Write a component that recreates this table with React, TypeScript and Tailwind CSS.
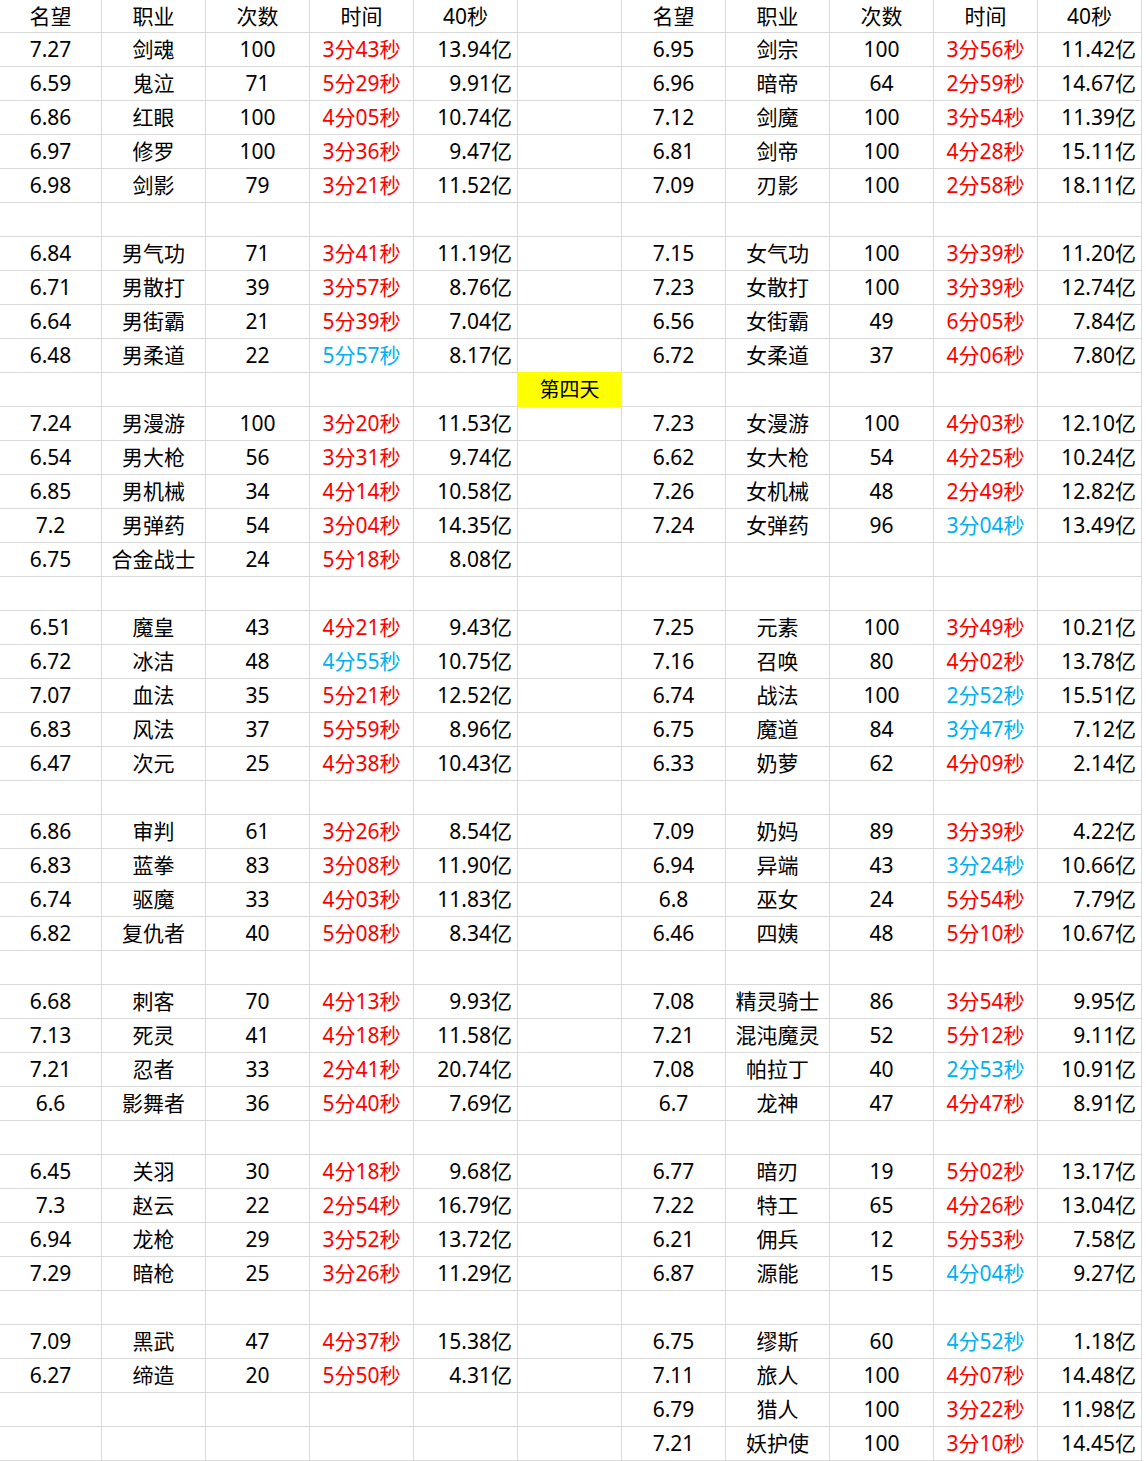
import React from 'react';

type Row = [string, string, string, string, string] | null;

// time prefixed with * renders blue instead of red
const left: Row[] = [
  ['7.27', '剑魂', '100', '3分43秒', '13.94亿'],
  ['6.59', '鬼泣', '71', '5分29秒', '9.91亿'],
  ['6.86', '红眼', '100', '4分05秒', '10.74亿'],
  ['6.97', '修罗', '100', '3分36秒', '9.47亿'],
  ['6.98', '剑影', '79', '3分21秒', '11.52亿'],
  null,
  ['6.84', '男气功', '71', '3分41秒', '11.19亿'],
  ['6.71', '男散打', '39', '3分57秒', '8.76亿'],
  ['6.64', '男街霸', '21', '5分39秒', '7.04亿'],
  ['6.48', '男柔道', '22', '*5分57秒', '8.17亿'],
  null,
  ['7.24', '男漫游', '100', '3分20秒', '11.53亿'],
  ['6.54', '男大枪', '56', '3分31秒', '9.74亿'],
  ['6.85', '男机械', '34', '4分14秒', '10.58亿'],
  ['7.2', '男弹药', '54', '3分04秒', '14.35亿'],
  ['6.75', '合金战士', '24', '5分18秒', '8.08亿'],
  null,
  ['6.51', '魔皇', '43', '4分21秒', '9.43亿'],
  ['6.72', '冰洁', '48', '*4分55秒', '10.75亿'],
  ['7.07', '血法', '35', '5分21秒', '12.52亿'],
  ['6.83', '风法', '37', '5分59秒', '8.96亿'],
  ['6.47', '次元', '25', '4分38秒', '10.43亿'],
  null,
  ['6.86', '审判', '61', '3分26秒', '8.54亿'],
  ['6.83', '蓝拳', '83', '3分08秒', '11.90亿'],
  ['6.74', '驱魔', '33', '4分03秒', '11.83亿'],
  ['6.82', '复仇者', '40', '5分08秒', '8.34亿'],
  null,
  ['6.68', '刺客', '70', '4分13秒', '9.93亿'],
  ['7.13', '死灵', '41', '4分18秒', '11.58亿'],
  ['7.21', '忍者', '33', '2分41秒', '20.74亿'],
  ['6.6', '影舞者', '36', '5分40秒', '7.69亿'],
  null,
  ['6.45', '关羽', '30', '4分18秒', '9.68亿'],
  ['7.3', '赵云', '22', '2分54秒', '16.79亿'],
  ['6.94', '龙枪', '29', '3分52秒', '13.72亿'],
  ['7.29', '暗枪', '25', '3分26秒', '11.29亿'],
  null,
  ['7.09', '黑武', '47', '4分37秒', '15.38亿'],
  ['6.27', '缔造', '20', '5分50秒', '4.31亿'],
  null,
  null,
];

const right: Row[] = [
  ['6.95', '剑宗', '100', '3分56秒', '11.42亿'],
  ['6.96', '暗帝', '64', '2分59秒', '14.67亿'],
  ['7.12', '剑魔', '100', '3分54秒', '11.39亿'],
  ['6.81', '剑帝', '100', '4分28秒', '15.11亿'],
  ['7.09', '刃影', '100', '2分58秒', '18.11亿'],
  null,
  ['7.15', '女气功', '100', '3分39秒', '11.20亿'],
  ['7.23', '女散打', '100', '3分39秒', '12.74亿'],
  ['6.56', '女街霸', '49', '6分05秒', '7.84亿'],
  ['6.72', '女柔道', '37', '4分06秒', '7.80亿'],
  null,
  ['7.23', '女漫游', '100', '4分03秒', '12.10亿'],
  ['6.62', '女大枪', '54', '4分25秒', '10.24亿'],
  ['7.26', '女机械', '48', '2分49秒', '12.82亿'],
  ['7.24', '女弹药', '96', '*3分04秒', '13.49亿'],
  null,
  null,
  ['7.25', '元素', '100', '3分49秒', '10.21亿'],
  ['7.16', '召唤', '80', '4分02秒', '13.78亿'],
  ['6.74', '战法', '100', '*2分52秒', '15.51亿'],
  ['6.75', '魔道', '84', '*3分47秒', '7.12亿'],
  ['6.33', '奶萝', '62', '4分09秒', '2.14亿'],
  null,
  ['7.09', '奶妈', '89', '3分39秒', '4.22亿'],
  ['6.94', '异端', '43', '*3分24秒', '10.66亿'],
  ['6.8', '巫女', '24', '5分54秒', '7.79亿'],
  ['6.46', '四姨', '48', '5分10秒', '10.67亿'],
  null,
  ['7.08', '精灵骑士', '86', '3分54秒', '9.95亿'],
  ['7.21', '混沌魔灵', '52', '5分12秒', '9.11亿'],
  ['7.08', '帕拉丁', '40', '*2分53秒', '10.91亿'],
  ['6.7', '龙神', '47', '4分47秒', '8.91亿'],
  null,
  ['6.77', '暗刃', '19', '5分02秒', '13.17亿'],
  ['7.22', '特工', '65', '4分26秒', '13.04亿'],
  ['6.21', '佣兵', '12', '5分53秒', '7.58亿'],
  ['6.87', '源能', '15', '*4分04秒', '9.27亿'],
  null,
  ['6.75', '缪斯', '60', '*4分52秒', '1.18亿'],
  ['7.11', '旅人', '100', '4分07秒', '14.48亿'],
  ['6.79', '猎人', '100', '3分22秒', '11.98亿'],
  ['7.21', '妖护使', '100', '3分10秒', '14.45亿'],
];

const headers = ['名望', '职业', '次数', '时间', '40秒'];

function Cells({ row, h }: { row: Row; h: string }) {
  const base = `${h} border-r border-b border-[#d9d9d9] flex items-center`;
  if (!row) {
    return (
      <>
        {headers.map((k) => (
          <div key={k} className={base} />
        ))}
      </>
    );
  }
  const [mw, job, count, time, dmg] = row;
  const blue = time.startsWith('*');
  return (
    <>
      <div className={`${base} justify-center`}>{mw}</div>
      <div className={`${base} justify-center`}>{job}</div>
      <div className={`${base} justify-center`}>{count}</div>
      <div className={`${base} justify-center ${blue ? 'text-[#00b0f0]' : 'text-[#ff0000]'}`}>
        {blue ? time.slice(1) : time}
      </div>
      <div className={`${base} justify-end pr-[5px]`}>{dmg}</div>
    </>
  );
}

export default function App() {
  const cell = 'border-r border-b border-[#d9d9d9] flex items-center justify-center';
  return (
    <div className="w-[1146px] h-[1461px] bg-white overflow-hidden font-['Noto_Sans','Noto_Sans_CJK_SC',sans-serif] text-[21px] leading-none text-black">
      <div className="grid grid-cols-[102px_repeat(10,104px)]">
        {/* Header */}
        {headers.map((t) => (
          <div key={'l' + t} className={`h-[33px] ${cell}`}>{t}</div>
        ))}
        <div className={`h-[33px] ${cell}`} />
        {headers.map((t) => (
          <div key={'r' + t} className={`h-[33px] ${cell}`}>{t}</div>
        ))}

        {left.map((row, i) => (
          <React.Fragment key={i}>
            <Cells row={row} h="h-[34px]" />
            {i === 10 ? (
              <div className="h-[34px] flex items-center justify-center bg-[#ffff00] border-r border-b border-[#ffff00] shadow-[-1px_-1px_0_#ffff00] text-[20px]">
                第四天
              </div>
            ) : (
              <div className={`h-[34px] ${cell}`} />
            )}
            <Cells row={right[i]} h="h-[34px]" />
          </React.Fragment>
        ))}
      </div>
    </div>
  );
}
